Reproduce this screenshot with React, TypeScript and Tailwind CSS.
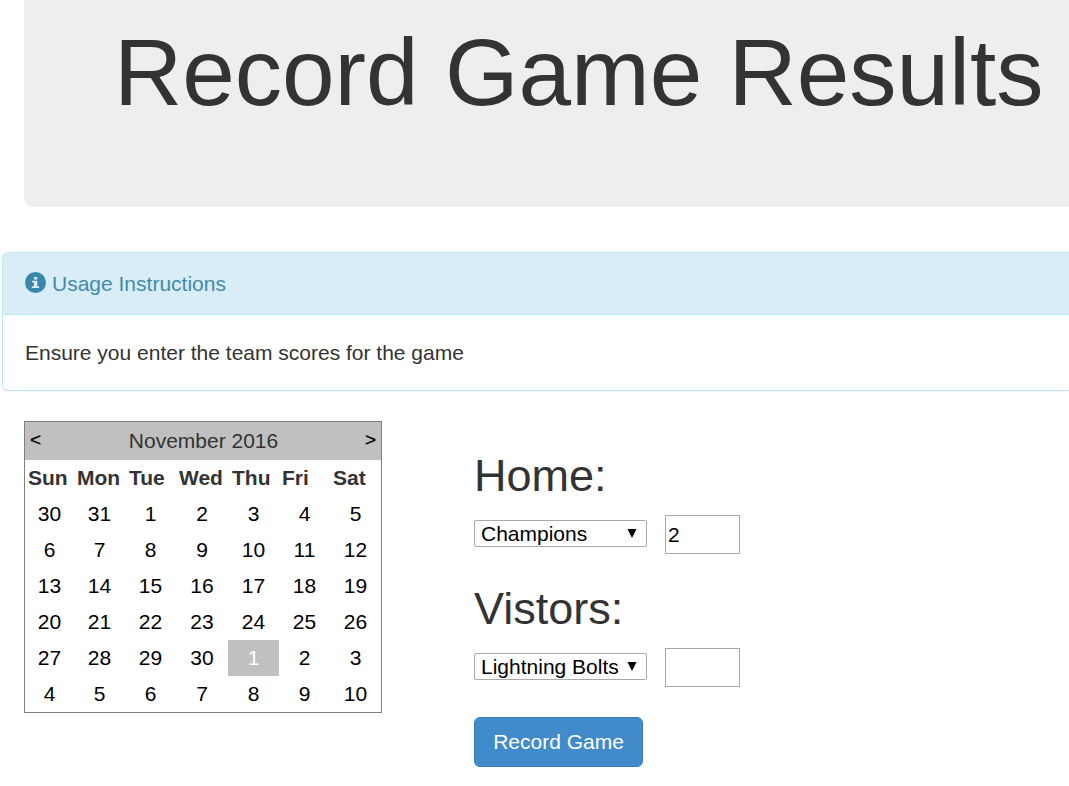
import React from "react";

const days = ["Sun", "Mon", "Tue", "Wed", "Thu", "Fri", "Sat"];

const weeks = [
  [30, 31, 1, 2, 3, 4, 5],
  [6, 7, 8, 9, 10, 11, 12],
  [13, 14, 15, 16, 17, 18, 19],
  [20, 21, 22, 23, 24, 25, 26],
  [27, 28, 29, 30, 1, 2, 3],
  [4, 5, 6, 7, 8, 9, 10],
];

const columns = "grid grid-cols-[49px_51px_51px_52px_51px_51px_51px]";

function InfoIcon() {
  return (
    <svg viewBox="0 0 21 21" className="mb-[2px] h-[21px] w-[21px] shrink-0 text-[#3a87ad]">
      <circle cx="10.5" cy="10.5" r="10.5" fill="currentColor" />
      <path d="M9 5h3.3v2.4H9zM7 8.7h5.3v5.5h1.8v1.9H6.9v-1.9H9v-3.6H7z" fill="#d9edf7" />
    </svg>
  );
}

function Calendar() {
  return (
    <section className="h-[292px] w-[358px] border border-[#808080]">
      <header className="flex h-[38px] items-center justify-between bg-[#c0c0c0] px-[5px] leading-[30px]">
        <button className="mb-[3px] text-[19px] text-black [-webkit-text-stroke:0.3px_black]">&lt;</button>
        <span className="pl-px">November 2016</span>
        <button className="mb-[3px] text-[19px] text-black [-webkit-text-stroke:0.3px_black]">&gt;</button>
      </header>
      <div className={columns}>
        {days.map((day) => (
          <div
            key={day}
            className={
              day.startsWith("T")
                ? "h-9 pl-[4px] font-bold leading-9"
                : "h-9 pl-[3px] font-bold leading-9"
            }
          >
            {day}
          </div>
        ))}
      </div>
      {weeks.map((week, row) => (
        <div key={row} className={columns}>
          {week.map((date, col) => (
            <div
              key={col}
              className={
                row === 4 && col === 4
                  ? "h-9 bg-[#c0c0c0] text-center leading-9 text-white"
                  : "h-9 text-center leading-9 text-black"
              }
            >
              {date}
            </div>
          ))}
        </div>
      ))}
    </section>
  );
}

function TeamField({ label, team, score }: { label: string; team: string; score: string }) {
  return (
    <div className="h-[133px]">
      <h2 className="h-[65px] pt-px text-[45px] leading-[50px]">{label}</h2>
      <div className="flex items-start">
        <button className="mt-[5px] flex h-[27px] w-[173px] items-center justify-between rounded-[2px] border border-[#a9a9a9] bg-white pr-[9px] pl-[6px] leading-[25px] whitespace-nowrap text-black">
          <span>{team}</span>
          <svg viewBox="0 0 10 9" className="h-[9px] w-[10px] shrink-0">
            <path d="M0.5 0h9L5 9z" fill="currentColor" />
          </svg>
        </button>
        <input
          defaultValue={score}
          aria-label={label}
          className="ml-[18px] h-[39px] w-[75px] border border-[#a9a9a9] bg-white px-[2px] text-black outline-none"
        />
      </div>
    </div>
  );
}

export default function App() {
  return (
    <main className="h-[786px] w-full overflow-hidden bg-white font-['Liberation_Sans',Arial,sans-serif] text-[21px] leading-[30px] text-[#333333]">
      <div className="ml-6 h-[207px] rounded-bl-[9px] bg-[#eeeeee] pt-[20px] pl-[90px]">
        <h1 className="text-[94.5px] leading-[104px] whitespace-nowrap">Record Game Results</h1>
      </div>
      <section className="mt-[45px] ml-[2px] h-[139px] rounded-l-[6px] border border-r-0 border-[#bce8f1] shadow-[0_1px_1px_rgba(0,0,0,0.05)]">
        <header className="flex h-[62px] items-center gap-[6px] rounded-tl-[5px] border-b border-[#bce8f1] bg-[#d9edf7] pl-[22px] text-[#428bad]">
          <InfoIcon />
          <span>Usage Instructions</span>
        </header>
        <p className="pt-[23px] pl-[22px]">Ensure you enter the team scores for the game</p>
      </section>
      <div className="mt-[30px] ml-6 flex">
        <Calendar />
        <form className="ml-[92px] pt-[29px]" onSubmit={(e) => e.preventDefault()}>
          <TeamField label="Home:" team="Champions" score="2" />
          <TeamField label="Vistors:" team="Lightning Bolts" score="" />
          <button className="mt-px h-[50px] w-[169px] rounded-[6px] border border-[#357ebd] bg-[#428bca] text-white">
            Record Game
          </button>
        </form>
      </div>
    </main>
  );
}
